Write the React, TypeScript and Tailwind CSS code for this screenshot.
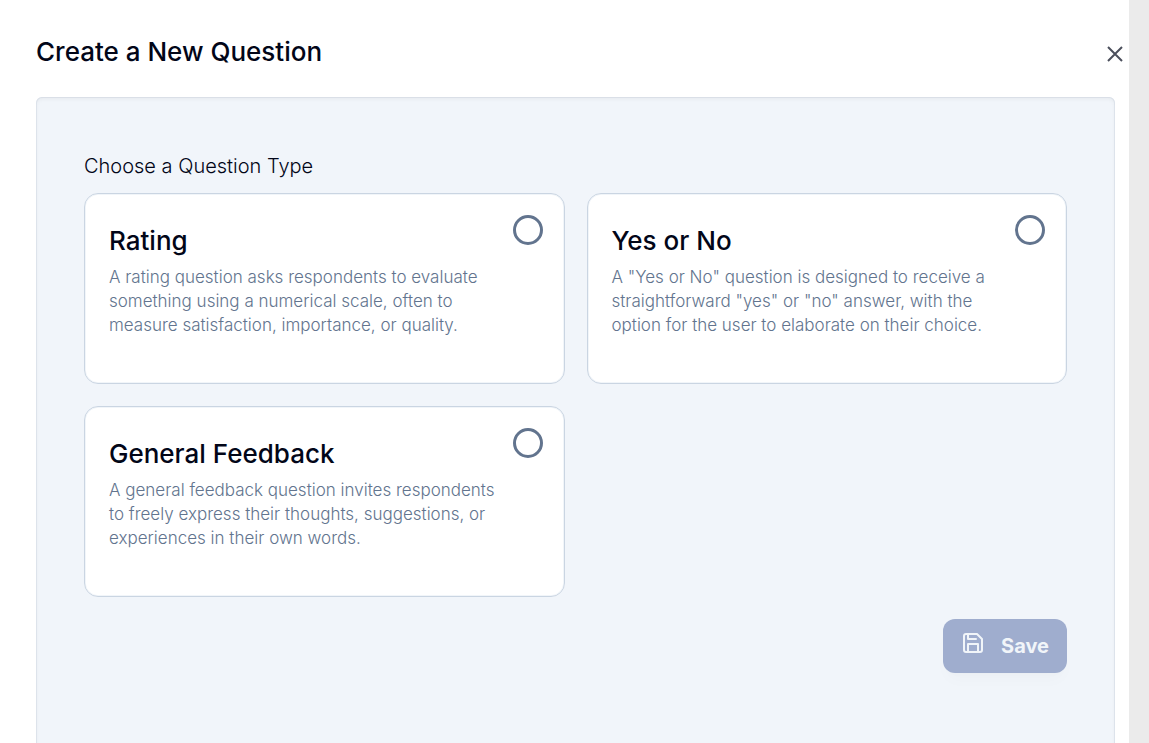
import { useState } from "react";

type QuestionType = {
  id: string;
  title: string;
  description: string;
};

const questionTypes: QuestionType[] = [
  {
    id: "rating",
    title: "Rating",
    description:
      "A rating question asks respondents to evaluate something using a numerical scale, often to measure satisfaction, importance, or quality.",
  },
  {
    id: "yes-no",
    title: "Yes or No",
    description:
      'A "Yes or No" question is designed to receive a straightforward "yes" or "no" answer, with the option for the user to elaborate on their choice.',
  },
  {
    id: "general",
    title: "General Feedback",
    description:
      "A general feedback question invites respondents to freely express their thoughts, suggestions, or experiences in their own words.",
  },
];

function SaveIcon() {
  return (
    <svg
      className="w-6 h-6 mb-1.5"
      viewBox="0 0 24 24"
      fill="none"
      stroke="currentColor"
      strokeWidth="2"
      strokeLinecap="round"
      strokeLinejoin="round"
      aria-hidden="true"
    >
      <path d="M19 21H5a2 2 0 0 1-2-2V5a2 2 0 0 1 2-2h11l5 5v11a2 2 0 0 1-2 2z" />
      <polyline points="17 21 17 13 7 13 7 21" />
      <polyline points="7 3 7 8 15 8" />
    </svg>
  );
}

export default function App() {
  const [selected, setSelected] = useState<string | null>(null);

  return (
    <div className="min-h-screen bg-[#ebebeb] pr-5 flex font-['Inter',sans-serif] text-slate-950">
      <div className="flex-1 flex flex-col bg-white pl-9 pr-3.5">
        {/* Header */}
        <header className="flex items-center justify-between pt-[34px] pb-[27px]">
          <h1 className="text-[26px] leading-9 font-medium">Create a New Question</h1>
          <button type="button" aria-label="Close" className="-mr-4 p-1 pt-2 text-[#4b4f5c] cursor-pointer">
            <svg className="w-6 h-6" viewBox="0 0 24 24" fill="none" stroke="currentColor" strokeWidth="2" aria-hidden="true">
              <path d="M5 5l14 14M19 5L5 19" />
            </svg>
          </button>
        </header>

        <form
          onSubmit={e => e.preventDefault()}
          className="flex-1 rounded-t-md bg-[#f1f5fa] px-12 pt-14 pb-24 inset-ring inset-ring-slate-200 inset-shadow-sm"
        >
          <fieldset>
            <legend className="mb-3.5 text-xl leading-[26px] font-light">Choose a Question Type</legend>

            <div className="grid grid-cols-2 gap-[22px]">
              {questionTypes.map(q => (
                <label
                  key={q.id}
                  className="flex items-start justify-between min-h-[191px] rounded-[14px] border border-slate-300 inset-ring inset-ring-slate-100 bg-white pl-6 pr-[21px] py-[21px] cursor-pointer"
                >
                  <span className="block pt-1.5">
                    <span className="block text-[26px] leading-10 font-medium">{q.title}</span>
                    <span className="block mt-1 text-[17px] leading-6 font-light text-slate-500">
                      {q.description}
                    </span>
                  </span>
                  <input
                    type="radio"
                    name="question-type"
                    value={q.id}
                    checked={selected === q.id}
                    onChange={() => setSelected(q.id)}
                    className="appearance-none shrink-0 w-[30px] h-[30px] rounded-full border-3 border-slate-500 checked:bg-slate-500 cursor-pointer"
                  />
                </label>
              ))}
            </div>
          </fieldset>

          <div className="flex justify-end mt-[22px]">
            <button
              type="submit"
              disabled={selected === null}
              className="flex items-center gap-4 h-[54px] px-[18px] rounded-xl bg-[#3d5a9e] text-white text-xl font-bold shadow-lg disabled:bg-[#9fadce] disabled:text-slate-100 disabled:shadow-black/2"
            >
              <SaveIcon />
              Save
            </button>
          </div>
        </form>
      </div>
    </div>
  );
}
